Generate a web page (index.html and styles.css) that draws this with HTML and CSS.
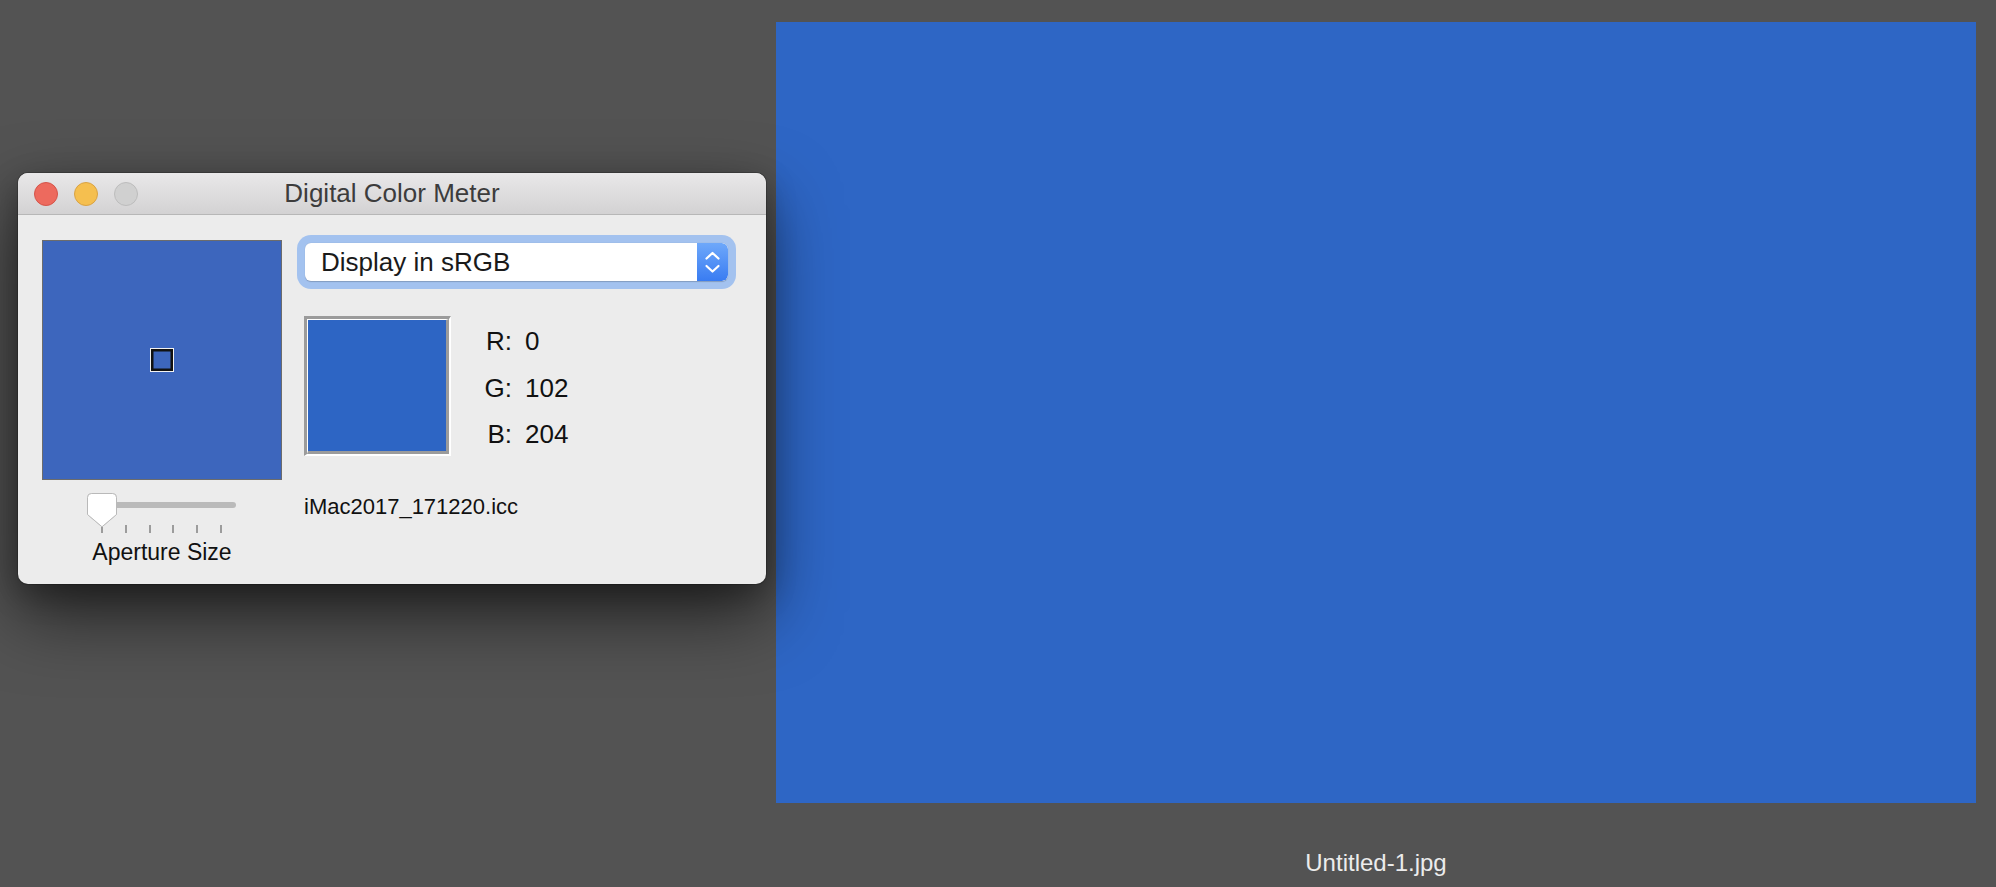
FILE: index.html
```html
<!DOCTYPE html>
<html lang="en">
<head>
<meta charset="utf-8">
<title>Digital Color Meter</title>
<link rel="stylesheet" href="styles.css">
</head>
<body>
<div class="desktop">
  <main class="viewer">
    <div class="photo"></div>
    <div class="caption">Untitled-1.jpg</div>
  </main>

  <section class="meter">
    <header class="titlebar">
      <div class="lights">
        <span class="light red"></span>
        <span class="light yellow"></span>
        <span class="light gray"></span>
      </div>
      <div class="title">Digital Color Meter</div>
      <div></div>
    </header>
    <div class="meter-body">
      <div class="left-col">
        <div class="preview"><div class="marker"></div></div>
        <div class="slider">
          <div class="track-row">
            <div class="track"></div>
            <svg class="knob" width="30" height="35" viewBox="0 0 30 35">
              <path d="M4.5 0.5 H25.5 Q29.5 0.5 29.5 4.5 V21.5 L15 33.8 L0.5 21.5 V4.5 Q0.5 0.5 4.5 0.5 Z" fill="#ffffff" stroke="#b9b9b9" stroke-width="1"/>
            </svg>
          </div>
          <div class="ticks"><i class="first"></i><i></i><i></i><i></i><i></i><i></i></div>
        </div>
        <div class="slider-label">Aperture Size</div>
      </div>

      <div class="right-col">
        <div class="popup-ring">
          <div class="popup">
            <span class="popup-text">Display in sRGB</span>
            <span class="popup-arrows">
              <svg width="31" height="38" viewBox="0 0 31 38">
                <path d="M9.5 15.5 L15.5 10 L21.5 15.5" fill="none" stroke="#ffffff" stroke-width="2.2" stroke-linecap="round" stroke-linejoin="round"/>
                <path d="M9.5 23 L15.5 28.5 L21.5 23" fill="none" stroke="#ffffff" stroke-width="2.2" stroke-linecap="round" stroke-linejoin="round"/>
              </svg>
            </span>
          </div>
        </div>

        <div class="readout">
          <div class="swatch-outer"><div class="swatch-inner"><div class="swatch"></div></div></div>
          <div class="values">
            <span class="lbl">R:</span><span class="val">0</span>
            <span class="lbl">G:</span><span class="val">102</span>
            <span class="lbl">B:</span><span class="val">204</span>
          </div>
        </div>

        <div class="profile">iMac2017_171220.icc</div>
      </div>
    </div>
  </section>
</div>
</body>
</html>
```

FILE: styles.css
```css
html, body {
  margin: 0;
  padding: 0;
}

body {
  width: 1996px;
  height: 887px;
  overflow: hidden;
  background: #535353;
  font-family: "Liberation Sans", Arial, sans-serif;
}

.desktop {
  position: relative;
  width: 1996px;
  height: 887px;
  display: flex;
  justify-content: flex-end;
  padding: 22px 20px 0 0;
  box-sizing: border-box;
}

/* ---------- image viewer ---------- */
.viewer {
  display: flex;
  flex-direction: column;
  align-items: center;
}

.photo {
  width: 1200px;
  height: 781px;
  background: #2e66c5;
}

.caption {
  margin-top: 46px;
  font-size: 24px;
  line-height: 28px;
  color: #ececec;
}

/* ---------- color meter window ---------- */
.meter {
  position: absolute;
  left: 18px;
  top: 173px;
  width: 748px;
  height: 411px;
  background: #ececec;
  border-radius: 10px;
  box-shadow: 0 0 0 1px rgba(0, 0, 0, 0.18), 0 30px 70px rgba(0, 0, 0, 0.6), 0 10px 30px rgba(0, 0, 0, 0.25);
  display: flex;
  flex-direction: column;
  overflow: hidden;
}

.titlebar {
  height: 41px;
  border-bottom: 1px solid #b7b7b7;
  background: linear-gradient(#e9e8e9, #d3d2d3);
  display: grid;
  grid-template-columns: 1fr auto 1fr;
  align-items: center;
}

.lights {
  display: flex;
  gap: 16px;
  padding-left: 16px;
}

.light {
  width: 24px;
  height: 24px;
  border-radius: 50%;
  box-sizing: border-box;
}

.light.red { background: #ed6a5e; border: 1px solid #d4544a; }
.light.yellow { background: #f5bf4f; border: 1px solid #d8a244; }
.light.gray { background: #d0d0d0; border: 1px solid #bcbcbc; }

.title {
  font-size: 26px;
  line-height: 41px;
  color: #3c3c3c;
}

.meter-body {
  flex: 1;
  display: flex;
  gap: 15px;
  padding: 20px 30px 0 24px;
}

/* left column */
.left-col {
  width: 240px;
  margin-top: 5px;
  display: flex;
  flex-direction: column;
}

.preview {
  width: 240px;
  height: 240px;
  box-sizing: border-box;
  border: 1px solid #6c6c6c;
  background: #3d66bd;
  display: grid;
  place-items: center;
}

.marker {
  width: 24px;
  height: 24px;
  box-sizing: border-box;
  border: 1.5px solid #f2f2f2;
  box-shadow: inset 0 0 0 2.5px #111;
  background: #3d66bd;
}

.slider {
  width: 150px;
  margin: 13px auto 0;
}

.track-row {
  position: relative;
  height: 34px;
}

.track {
  position: absolute;
  left: 4px;
  right: 1px;
  top: 9px;
  height: 6px;
  border-radius: 3px;
  background: #bababa;
}

.knob {
  position: absolute;
  left: 0;
  top: 0;
  filter: drop-shadow(0 0.5px 0.5px rgba(0, 0, 0, 0.15));
}

.ticks {
  display: flex;
  justify-content: space-between;
  align-items: flex-end;
  height: 8px;
  margin-top: -2px;
  padding: 0 15px 0 14px;
}

.ticks i {
  display: block;
  width: 2px;
  height: 8px;
  background: #9c9c9c;
}

.ticks i.first {
  height: 6px;
}

.slider-label {
  margin-top: 6px;
  text-align: center;
  font-size: 23px;
  line-height: 26px;
  color: #111;
}

/* right column */
.right-col {
  flex: 1;
  display: flex;
  flex-direction: column;
}

.popup-ring {
  padding: 8px;
  border-radius: 14px;
  background: #a3c2ef;
}

.popup {
  height: 38px;
  border-radius: 6px;
  background: #ffffff;
  display: flex;
  align-items: center;
  overflow: hidden;
  box-shadow: 0 0.5px 1px rgba(0, 0, 0, 0.2);
}

.popup-text {
  flex: 1;
  padding-left: 16px;
  font-size: 26px;
  line-height: 38px;
  color: #1a1a1a;
}

.popup-arrows {
  width: 31px;
  height: 38px;
  background: linear-gradient(#6ea8fa, #397cf2);
  border-radius: 0 6px 6px 0;
}

.popup-arrows svg {
  display: block;
}

.readout {
  display: flex;
  align-items: flex-start;
  margin-top: 27px;
}

.swatch-outer {
  margin-left: 7px;
  border-style: solid;
  border-width: 3px 2px 2px 3px;
  border-color: #9b9b9b #ffffff #ffffff #9b9b9b;
}

.swatch-inner {
  border-style: solid;
  border-width: 1px 3px 3px 1px;
  border-color: #ffffff #9b9b9b #9b9b9b #ffffff;
}

.swatch {
  width: 138px;
  height: 131px;
  background: #2d65c4;
}

.values {
  margin: 2px 0 0 21px;
  display: grid;
  grid-template-columns: 40px auto;
  column-gap: 13px;
  font-size: 26px;
  line-height: 46.5px;
  color: #111;
}

.values .lbl {
  text-align: right;
}

.profile {
  margin: 36px 0 0 7px;
  font-size: 22px;
  line-height: 25px;
  color: #111;
}
```
